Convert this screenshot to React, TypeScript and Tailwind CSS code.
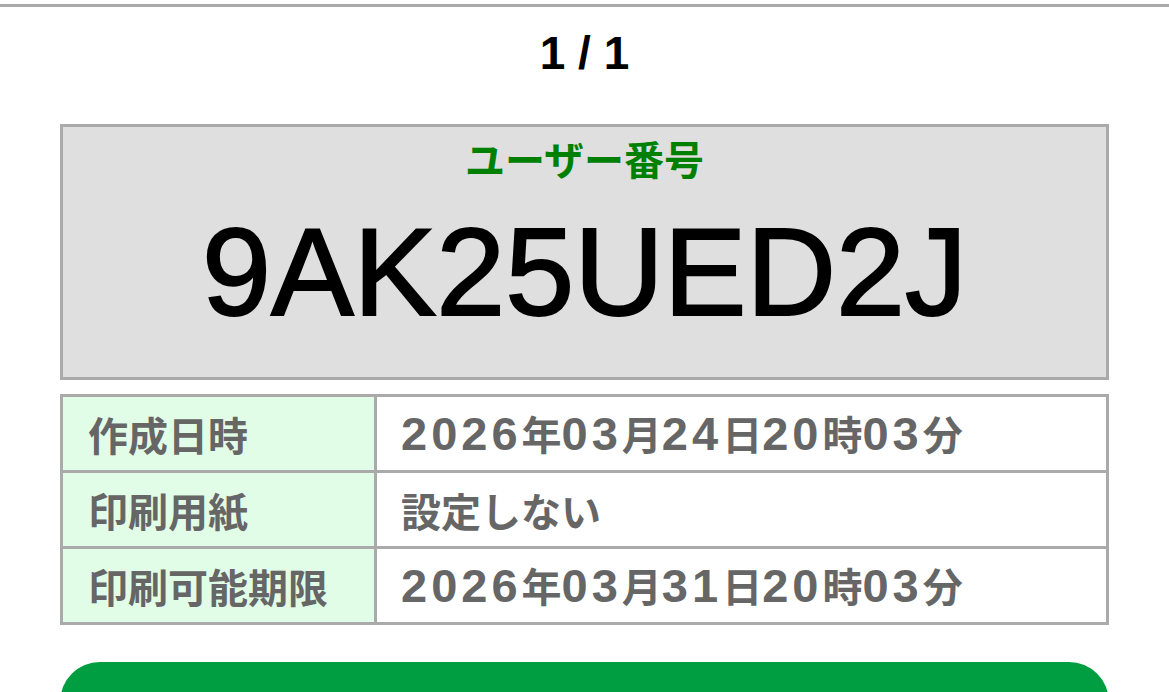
const jp = "font-['Noto_Sans_CJK_JP',sans-serif]";

const rows: [string, string][] = [
  ["作成日時", "2026年03月24日20時03分"],
  ["印刷用紙", "設定しない"],
  ["印刷可能期限", "2026年03月31日20時03分"],
];

// digits in the reference are set larger than the kanji (Hiragino-style), so size them apart
function Mixed({ text }: { text: string }) {
  return (
    <>
      {text.split(/(\d+)/).map((part, i) =>
        /^\d+$/.test(part) ? (
          <span key={i} className="font-['Liberation_Sans',sans-serif] text-[47px] tracking-[4px]">
            {part}
          </span>
        ) : (
          <span key={i}>{part}</span>
        ),
      )}
    </>
  );
}

export default function App() {
  return (
    <div className={`min-h-[692px] bg-white ${jp}`}>
      <div className="pt-[4px]">
        <div className="h-[3px] bg-[#aaaaaa]" />
      </div>

      <p className="pt-[20px] pb-[45px] text-center text-[46px] font-bold leading-[52px] text-black font-['Liberation_Sans',sans-serif]">
        1 / 1
      </p>

      <div className="px-[60px]">
        <div className="flex h-[256px] flex-col items-center border-[3px] border-[#aaaaaa] bg-[#dfdfdf]">
          <p className="pt-[7px] text-[40px] font-bold leading-[48px] text-[#008000]">ユーザー番号</p>
          <p className="pt-[28px] text-[124px] leading-none text-black font-['Liberation_Sans',sans-serif] [-webkit-text-stroke:2px_black]">
            9AK25UED2J
          </p>
        </div>

        <table className="mt-[14px] w-full border-collapse border-[3px] border-[#aaaaaa]">
          <tbody>
            {rows.map(([label, value]) => (
              <tr key={label} className="h-[76px]">
                <td className="w-[314px] border-[3px] border-[#aaaaaa] bg-[#e1fde7] pl-[25px] text-[40px] font-bold leading-none text-[#666666]">
                  {label}
                </td>
                <td className="border-[3px] border-[#aaaaaa] pl-[24px] text-[40px] font-bold leading-none text-[#666666]">
                  <Mixed text={value} />
                </td>
              </tr>
            ))}
          </tbody>
        </table>

        <button className="mt-[37px] block h-[100px] w-full rounded-[40px] bg-[#009e40]" />
      </div>
    </div>
  );
}
